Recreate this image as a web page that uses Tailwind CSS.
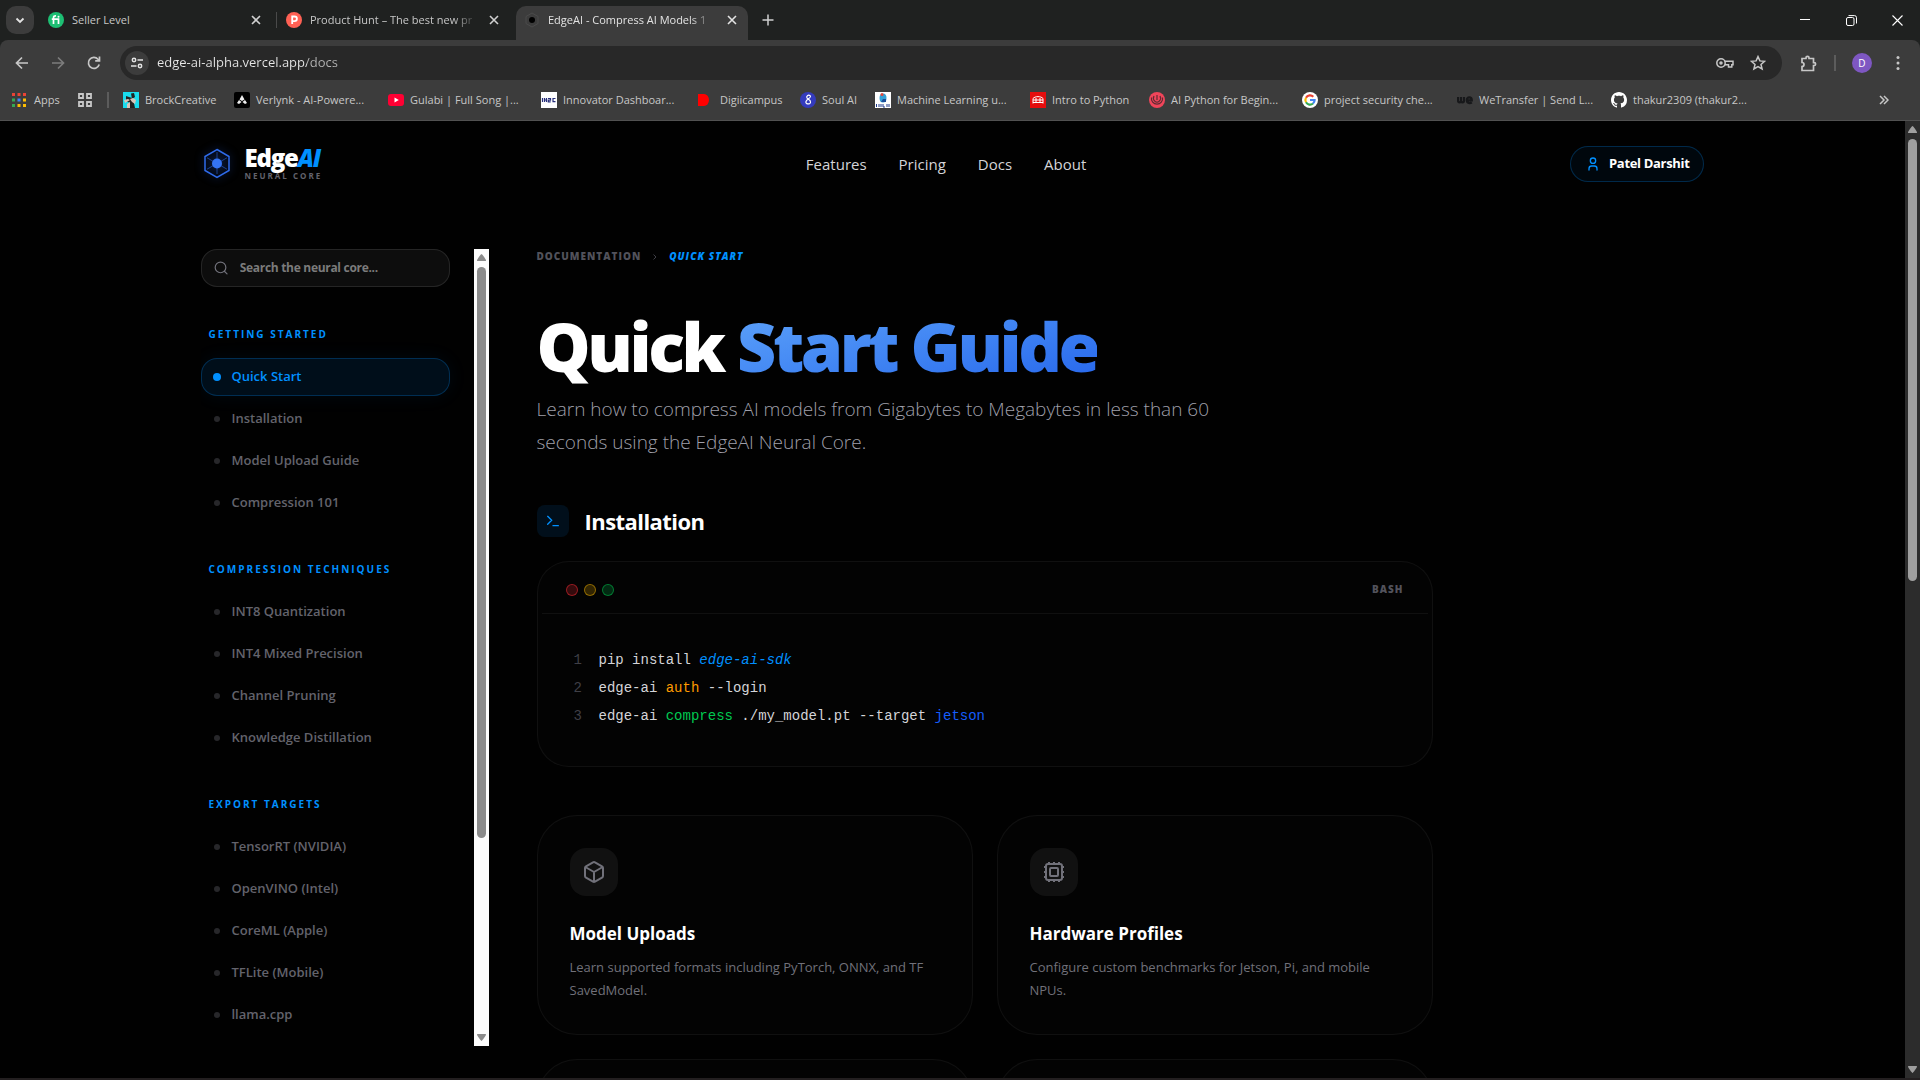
<!DOCTYPE html>
<html lang="en">

<head>
    <meta charset="UTF-8">
    <meta name="viewport" content="width=device-width, initial-scale=1.0">
    <title>EdgeAI - Compress AI Models</title>
    <script src="https://cdn.jsdelivr.net/npm/@tailwindcss/browser@4"></script>
</head>

<body class="h-screen flex flex-col overflow-hidden bg-black font-['Open_Sans','Noto_Sans',sans-serif] text-white">

    <!-- Tab strip -->
    <div class="h-10 shrink-0 flex bg-[#1f2120] text-[11px] text-[#c7c7c7]">
        <button aria-label="Search tabs" class="ml-[6px] mt-[6px] size-7 rounded-[10px] bg-[#3c3c3c] flex items-center justify-center">
            <svg class="size-3" viewBox="0 0 12 12" fill="none" stroke="#e3e3e3" stroke-width="1.8"><path d="M2.5 4.5 6 8l3.500-3.500" /></svg>
        </button>
        <div class="ml-[6px] w-[236px] flex items-center pl-2">
            <svg class="size-4 shrink-0" viewBox="0 0 16 16"><circle cx="8" cy="8" r="8" fill="#1dbf73" /><g stroke="#fff" stroke-width="1.700" fill="none"><path d="M5.500 12V6c0-1.600.8-2.300 2.500-2.200M3.800 7.100h6.700V12" /></g><circle cx="10.500" cy="4.700" r="1" fill="#fff" /></svg>
            <span class="ml-2 flex-1">Seller Level</span>
            <button aria-label="Close tab" class="mr-[15px]"><svg class="size-[10px]" viewBox="0 0 10 10" stroke="#d0d0d0" stroke-width="1.600"><path d="m1 1 8 8M9 1 1 9" /></svg></button>
        </div>
        <div class="w-[240px] flex items-center">
            <span class="w-px h-4 bg-[#4a4a4a] mr-[9px]"></span>
            <svg class="size-4 shrink-0" viewBox="0 0 16 16"><circle cx="8" cy="8" r="8" fill="#ff6154" /><path d="M6.200 12V4.500h2.400a2.300 2.300 0 0 1 0 4.600H6.200" fill="none" stroke="#fff" stroke-width="1.800" /></svg>
            <span class="ml-2 w-[168px] whitespace-nowrap mask-r-from-85%">Product Hunt – The best new pr</span>
            <button aria-label="Close tab" class="ml-[11px]"><svg class="size-[10px]" viewBox="0 0 10 10" stroke="#d0d0d0" stroke-width="1.600"><path d="m1 1 8 8M9 1 1 9" /></svg></button>
        </div>
        <div class="mt-[6px] w-[232px] rounded-t-[10px] bg-[#3c3c3c] flex items-center pl-2 text-[#e3e3e3] pb-[6px]">
            <svg class="size-4 shrink-0" viewBox="0 0 16 16"><path d="m8 1 6 3.500v7L8 15l-6-3.500v-7z" fill="none" stroke="#4b4b4b" /><circle cx="8" cy="8" r="3" fill="#000" /></svg>
            <span class="ml-2 w-[167px] whitespace-nowrap mask-r-from-85%">EdgeAI - Compress AI Models 1</span>
            <button aria-label="Close tab" class="ml-3"><svg class="size-[10px]" viewBox="0 0 10 10" stroke="#e3e3e3" stroke-width="1.600"><path d="m1 1 8 8M9 1 1 9" /></svg></button>
        </div>
        <button aria-label="New tab" class="ml-[14px]"><svg class="size-3" viewBox="0 0 12 12" stroke="#d0d0d0" stroke-width="1.500"><path d="M6 .5v11M.5 6h11" /></svg></button>
        <div class="ml-auto flex">
            <button aria-label="Minimize" class="w-[46px] flex items-center justify-center"><svg class="size-[10px]" viewBox="0 0 10 10" stroke="#fff"><path d="M0 4.500h10" /></svg></button>
            <button aria-label="Restore" class="w-[46px] flex items-center justify-center"><svg class="size-[11px]" viewBox="0 0 11 11" fill="none" stroke="#fff"><rect x=".5" y="2.500" width="7.500" height="8" rx="1.500" /><path d="M2.500.6H8.500a2 2 0 0 1 2 2V8.500" /></svg></button>
            <button aria-label="Close" class="w-[46px] flex items-center justify-center"><svg class="size-[11px]" viewBox="0 0 11 11" stroke="#fff" stroke-width="1.100"><path d="m.5.5 10 10M10.500.5l-10 10" /></svg></button>
        </div>
    </div>

    <!-- Address bar -->
    <div class="shrink-0 bg-[#1f2120]">
        <div class="h-[46px] rounded-t-[8px] bg-[#3c3c3c] flex items-center">
            <button aria-label="Back" class="w-9 ml-1 flex justify-center"><svg class="size-4" viewBox="0 0 16 16" fill="none" stroke="#c7c7c7" stroke-width="1.700"><path d="M14 8H2.500M8 2.500 2.500 8 8 13.500" /></svg></button>
            <button aria-label="Forward" class="w-9 flex justify-center"><svg class="size-4" viewBox="0 0 16 16" fill="none" stroke="#7c7c7c" stroke-width="1.700"><path d="M2 8h11.500M8 2.500 13.500 8 8 13.500" /></svg></button>
            <button aria-label="Reload" class="w-9 flex justify-center"><svg class="size-4" viewBox="0 0 16 16" fill="none" stroke="#c7c7c7" stroke-width="1.700"><path d="M13.200 9.500A5.500 5.500 0 1 1 12 4.200l1 1.100" /><path d="M13.500 1.500v4.300H9.200" /></svg></button>
            <div class="ml-2 flex-1 h-[34px] rounded-full bg-[#282828] flex items-center pl-[5px]">
                <button aria-label="Site information" class="size-6 rounded-full bg-[#3c3c3c] flex items-center justify-center">
                    <svg class="size-[14px]" viewBox="0 0 14 14" fill="none" stroke="#e3e3e3" stroke-width="1.500"><circle cx="4" cy="4" r="1.700" /><path d="M7.500 4H13M1 10h5.500" /><circle cx="10" cy="10" r="1.700" /></svg>
                </button>
                <input type="text" aria-label="Address" value="edge-ai-alpha.vercel.app/docs"
                    class="ml-2 flex-1 text-[13px] bg-[linear-gradient(to_right,#e8e8e8_150px,#b4b4b4_150px)] bg-clip-text text-transparent outline-none">
                <button aria-label="Passwords" class="mr-4"><svg class="w-[18px] h-4" viewBox="0 0 18 16" fill="none" stroke="#c7c7c7" stroke-width="1.500"><circle cx="5" cy="8" r="4.200" /><circle cx="5" cy="8" r="1" /><path d="M8.800 6.200H17v3.600h-1.200V12h-3.300V9.800H8.800" /></svg></button>
                <button aria-label="Bookmark this page" class="mr-4"><svg class="size-4" viewBox="0 0 16 16" fill="none" stroke="#c7c7c7" stroke-width="1.500"><path d="m8 1.600 1.900 4.300 4.700.4-3.600 3.100 1.100 4.600L8 11.600 3.900 14 5 9.400 1.400 6.300l4.700-.4z" /></svg></button>
            </div>
            <button aria-label="Extensions" class="ml-[18px]"><svg class="size-[17px]" viewBox="0 0 17 17" fill="none" stroke="#c7c7c7" stroke-width="1.700"><path d="M2 3.500h4V2.800a1.500 1.500 0 0 1 3 0v.7h4.500v4.200h.7a1.400 1.400 0 0 1 0 2.800h-.7v5H2v-4a2 2 0 0 0 0-4z" /></svg></button>
            <span class="w-[2px] h-4 bg-[#5c5c5c] ml-[17px]"></span>
            <button class="ml-4 size-5 rounded-full bg-[#7e57c2] text-[10px] leading-5">D</button>
            <button aria-label="Menu" class="w-4 ml-[18px] mr-[14px] flex justify-center"><svg class="w-1 h-4" viewBox="0 0 4 16" fill="#c7c7c7"><circle cx="2" cy="2.500" r="1.500" /><circle cx="2" cy="8" r="1.500" /><circle cx="2" cy="13.500" r="1.500" /></svg></button>
        </div>
    </div>

    <!-- Bookmarks -->
    <div class="h-[35px] shrink-0 bg-[#3c3c3c] border-b border-[#515151] flex items-center text-[11px] leading-4 text-[#c7c7c7] whitespace-nowrap pb-[6px]">
        <a href="#" class="ml-3 w-[66px] flex items-center gap-2">
            <svg class="size-[14px]" viewBox="0 0 14 14"><g fill="#ea4335"><path d="M0 0h3v3H0zM5.500 0h3v3h-3zM11 0h3v3h-3z" /></g><path fill="#34a853" d="M0 5.500h3v3H0zM0 11h3v3H0z" /><path fill="#4285f4" d="M5.500 5.500h3v3h-3z" /><path fill="#fbbc04" d="M11 5.500h3v3h-3zM5.500 11h3v3h-3zM11 11h3v3h-3z" /></svg>
            Apps
        </a>
        <button aria-label="Tab groups"><svg class="size-[14px]" viewBox="0 0 14 14" fill="none" stroke="#c7c7c7" stroke-width="1.800"><path d="M1 1h4v4H1zM9 1h4v4H9zM1 9h4v4H1zM9 9h4v4H9z" /></svg></button>
        <span class="w-[2px] h-4 bg-[#5c5c5c] ml-[15px] mr-[14px]"></span>
        <a href="#" class="w-[111px] flex items-center gap-[6px]">
            <svg class="size-4" viewBox="0 0 16 16"><path fill="#19dcee" d="M0 0h16v16H0z" /><path fill="#222" d="M8 1.500 11 1l1 4-3 2zM3 4l6 2 2 5 1 5H6l1-5-4-2z" /><path fill="#d8c4b8" d="m7 7 3-1 3 2-1 4-3-2zM1 8l4-1 2 1-5 3zM4 12l3-2v6H4z" /></svg>
            BrockCreative
        </a>
        <a href="#" class="w-[154px] flex items-center gap-[6px]">
            <svg class="size-4" viewBox="0 0 16 16"><rect width="16" height="16" rx="2" fill="#000" /><path d="m8 3 2.500 4.500L8 9 5.500 7.500zM5 8l2.500 2L5 12 3 11zM11 8l-2.500 2 2.500 2 2-1z" fill="#eee" /></svg>
            Verlynk - AI-Powere...
        </a>
        <a href="#" class="w-[153px] flex items-center gap-[6px]">
            <svg class="size-4" viewBox="0 0 16 16"><rect y="2" width="16" height="12" rx="3" fill="#ff0033" /><path d="m6.500 5.500 4.300 2.500-4.300 2.500z" fill="#fff" /></svg>
            Gulabi | Full Song |...
        </a>
        <a href="#" class="w-[157px] flex items-center gap-[6px]">
            <svg class="size-4" viewBox="0 0 16 16"><path fill="#fff" d="M0 0h16v16H0z" /><path d="M1.500 6v4M3.500 6v4M3.500 8h2M5.500 6v4M7 6.500h2.500v1.700H7.300v1.700h2.400M14.500 6.500H12V9.700h2.500" fill="none" stroke="#28307c" stroke-width="1.200" /></svg>
            Innovator Dashboar...
        </a>
        <a href="#" class="w-[102px] flex items-center gap-[6px]">
            <svg class="size-4" viewBox="0 0 16 16"><path d="M0 2h6a5 6 0 0 1 0 12H0z" fill="#ff0000" /></svg>
            Digiicampus
        </a>
        <a href="#" class="w-[75px] flex items-center gap-[6px]">
            <svg class="size-4" viewBox="0 0 16 16"><circle cx="8" cy="8" r="8" fill="#343bbd" /><path d="M10.500 4C8 2 6 4.500 7 6s4 2 3.500 4.500S5 12 6 9.500 11 6 10.500 4" fill="none" stroke="#fff" stroke-width="1.200" /></svg>
            Soul AI
        </a>
        <a href="#" class="w-[155px] flex items-center gap-[6px]">
            <svg class="size-4" viewBox="0 0 16 16"><path fill="#fff" d="M0 0h16v16H0z" /><ellipse cx="8" cy="6" rx="3.500" ry="4.500" fill="#35a1d6" /><circle cx="7" cy="2.500" r="1.500" fill="#e2473b" /><path d="M8 7h3v3H6z" fill="#1c4d9a" /><path d="M1.500 12v3M4 12v3M6 12v3M8 12v3h2M12 12v3M14 12v3" stroke="#1d3a8b" fill="none" /></svg>
            Machine Learning u...
        </a>
        <a href="#" class="w-[119px] flex items-center gap-[6px]">
            <svg class="size-4" viewBox="0 0 16 16"><path fill="#e50d0d" d="M0 0h16v16H0z" /><path d="M3 6.500c2-2.500 8-2.500 10 0M3 6.500v5M13 6.500v5M3 8h10M3 10.500h10M6 6v4M10 6v4" stroke="#fff" fill="none" /></svg>
            Intro to Python
        </a>
        <a href="#" class="w-[153px] flex items-center gap-[6px]">
            <svg class="size-4" viewBox="0 0 16 16"><circle cx="8" cy="8" r="8" fill="#f0455a" /><g fill="none" stroke="#5f2a33" stroke-width="1.200"><path d="M2.500 5.500a5.600 5.600 0 1 0 11 0M5 4a3.500 4 0 1 0 6 0M8 3v5" /></g></svg>
            AI Python for Begin...
        </a>
        <a href="#" class="w-[155px] flex items-center gap-[6px]">
            <svg class="size-4" viewBox="0 0 16 16"><circle cx="8" cy="8" r="8" fill="#fff" /><g fill="none" stroke-width="2.200"><path d="M11.300 4.700A4.600 4.600 0 0 0 4 5.700" stroke="#ea4335" /><path d="M4 5.700a4.600 4.600 0 0 0 0 4.600" stroke="#fbbc04" /><path d="M4 10.300a4.600 4.600 0 0 0 7 1.200" stroke="#34a853" /><path d="M11 11.500A4.600 4.600 0 0 0 12.600 8H8" stroke="#4285f4" /></g></svg>
            project security che...
        </a>
        <a href="#" class="w-[154px] flex items-center gap-[6px]">
            <svg class="size-4" viewBox="0 0 16 16" fill="none" stroke="#17181a" stroke-width="2.200"><path d="M1 5v3.500c0 2.500 3 2.500 3 0V5v3.500c0 2.500 3 2.500 3 0V5M10 8.300h4.800c0-4-5-4-5 0 0 3 3.500 3.300 5 2" /></svg>
            WeTransfer | Send L...
        </a>
        <a href="#" class="flex items-center gap-[6px]">
            <svg class="size-4" viewBox="0 0 16 16" fill="#fff"><path d="M8 0C3.580 0 0 3.580 0 8c0 3.540 2.290 6.530 5.470 7.590.4.070.55-.17.55-.38 0-.19-.01-.82-.01-1.490-2.010.37-2.530-.49-2.690-.94-.09-.23-.48-.94-.82-1.130-.28-.15-.68-.52-.01-.53.63-.01 1.080.58 1.230.82.72 1.210 1.870.87 2.330.66.07-.52.28-.87.51-1.070-1.780-.2-3.640-.89-3.640-3.950 0-.87.31-1.590.82-2.150-.08-.2-.36-1.020.08-2.120 0 0 .67-.21 2.200.82.64-.18 1.320-.27 2-.27s1.360.09 2 .27c1.530-1.040 2.200-.82 2.200-.82.44 1.100.16 1.920.08 2.120.51.56.82 1.270.82 2.150 0 3.070-1.870 3.750-3.650 3.950.29.25.54.73.54 1.480 0 1.070-.01 1.930-.01 2.200 0 .21.15.46.55.38A8.010 8.010 0 0 0 16 8c0-4.420-3.580-8-8-8" /></svg>
            thakur2309 (thakur2...
        </a>
        <button aria-label="More bookmarks" class="ml-auto mr-[31px]"><svg class="size-[10px]" viewBox="0 0 10 10" fill="none" stroke="#c7c7c7" stroke-width="1.500"><path d="m1 1 4 4-4 4M5 1l4 4-4 4" /></svg></button>
    </div>

    <!-- Page -->
    <div class="flex-1 min-h-0 flex border-b-2 border-[#231f20]">
        <div class="flex-1 overflow-hidden bg-[#010101]">
            <div class="max-w-[1536px] mx-auto px-4">
                <header class="h-[86px] flex items-center justify-between">
                    <a href="#" class="flex items-center gap-3">
                        <svg class="size-8 drop-shadow-[0_0_4px_#2563eb80]" viewBox="0 0 32 32" fill="none" stroke="#2f6bea">
                            <path d="m16 1.500 12 7v14l-12 7-12-7v-14z" stroke-width="1.500" />
                            <path d="M16 4v22M6 9.800l20 11.400M26 9.800 6 21.200" stroke-opacity=".55" />
                            <circle cx="16" cy="15.500" r="5" fill="#3474f4" stroke="none" />
                        </svg>
                        <span>
                            <span class="block text-2xl leading-6 font-extrabold tracking-tighter">Edge<span class="italic text-[#0090ff]">AI</span></span>
                            <span class="block text-[8px] leading-3 font-bold tracking-[2px] text-[#63636c]">NEURAL CORE</span>
                        </span>
                    </a>
                    <nav class="flex gap-8 text-[15px] font-medium text-[#d4d4d8]">
                        <a href="#">Features</a>
                        <a href="#">Pricing</a>
                        <a href="#">Docs</a>
                        <a href="#">About</a>
                    </nav>
                    <button class="h-9 px-[14px] rounded-full border border-[#0090ff]/25 bg-[#0090ff]/5 flex items-center gap-2 text-[13px] font-bold tracking-tight">
                        <svg class="size-4" viewBox="0 0 24 24" fill="none" stroke="#0090ff" stroke-width="2" stroke-linecap="round"><path d="M18 21v-2a4 4 0 0 0-4-4h-4a4 4 0 0 0-4 4v2" /><circle cx="12" cy="7" r="4" /></svg>
                        Patel Darshit
                    </button>
                </header>

                <div class="mt-[42px] flex gap-12">
                    <!-- Docs menu -->
                    <aside class="w-72 h-[calc(100vh-283px)] shrink-0 flex">
                        <div class="flex-1 pr-6 overflow-hidden text-[13px] font-semibold text-[#63636c]">
                            <div class="h-[38px] rounded-2xl border border-white/10 bg-white/5 flex items-center pl-3 mb-10">
                                <svg class="size-4" viewBox="0 0 24 24" fill="none" stroke="#71717a" stroke-width="2" stroke-linecap="round"><circle cx="11" cy="11" r="9" /><path d="m17.500 17.500 4.500 4.500" /></svg>
                                <input type="text" aria-label="Search" placeholder="Search the neural core..."
                                    class="ml-3 w-full text-xs font-bold tracking-tight bg-transparent outline-none placeholder:text-[#7b7b7b]">
                            </div>

                            <h4 class="pl-2 mb-4 text-[10px] leading-[15px] font-bold tracking-[2px] text-[#0090ff]">GETTING STARTED</h4>
                            <ul class="flex flex-col gap-1 mb-10">
                                <li><a href="#" class="h-[38px] rounded-2xl border border-[#0090ff]/25 bg-[#0090ff]/10 shadow-[0_0_20px_#0090ff12] pl-[11px] flex items-center gap-[11px] text-[#0090ff]"><span class="size-2 rounded-full bg-[#0090ff]"></span>Quick Start</a></li>
                                <li><a href="#" class="h-[38px] pl-[13px] flex items-center gap-3"><span class="size-[6px] rounded-full bg-[#27272a]"></span>Installation</a></li>
                                <li><a href="#" class="h-[38px] pl-[13px] flex items-center gap-3"><span class="size-[6px] rounded-full bg-[#27272a]"></span>Model Upload Guide</a></li>
                                <li><a href="#" class="h-[38px] pl-[13px] flex items-center gap-3"><span class="size-[6px] rounded-full bg-[#27272a]"></span>Compression 101</a></li>
                            </ul>

                            <h4 class="pl-2 mb-4 text-[10px] leading-[15px] font-bold tracking-[2px] text-[#0090ff]">COMPRESSION TECHNIQUES</h4>
                            <ul class="flex flex-col gap-1 mb-10">
                                <li><a href="#" class="h-[38px] pl-[13px] flex items-center gap-3"><span class="size-[6px] rounded-full bg-[#27272a]"></span>INT8 Quantization</a></li>
                                <li><a href="#" class="h-[38px] pl-[13px] flex items-center gap-3"><span class="size-[6px] rounded-full bg-[#27272a]"></span>INT4 Mixed Precision</a></li>
                                <li><a href="#" class="h-[38px] pl-[13px] flex items-center gap-3"><span class="size-[6px] rounded-full bg-[#27272a]"></span>Channel Pruning</a></li>
                                <li><a href="#" class="h-[38px] pl-[13px] flex items-center gap-3"><span class="size-[6px] rounded-full bg-[#27272a]"></span>Knowledge Distillation</a></li>
                            </ul>

                            <h4 class="pl-2 mb-4 text-[10px] leading-[15px] font-bold tracking-[2px] text-[#0090ff]">EXPORT TARGETS</h4>
                            <ul class="flex flex-col gap-1">
                                <li><a href="#" class="h-[38px] pl-[13px] flex items-center gap-3"><span class="size-[6px] rounded-full bg-[#27272a]"></span>TensorRT (NVIDIA)</a></li>
                                <li><a href="#" class="h-[38px] pl-[13px] flex items-center gap-3"><span class="size-[6px] rounded-full bg-[#27272a]"></span>OpenVINO (Intel)</a></li>
                                <li><a href="#" class="h-[38px] pl-[13px] flex items-center gap-3"><span class="size-[6px] rounded-full bg-[#27272a]"></span>CoreML (Apple)</a></li>
                                <li><a href="#" class="h-[38px] pl-[13px] flex items-center gap-3"><span class="size-[6px] rounded-full bg-[#27272a]"></span>TFLite (Mobile)</a></li>
                                <li><a href="#" class="h-[38px] pl-[13px] flex items-center gap-3"><span class="size-[6px] rounded-full bg-[#27272a]"></span>llama.cpp</a></li>
                            </ul>
                        </div>
                        <div class="w-[15px] bg-[#fcfcfc] flex flex-col items-center py-[5px]">
                            <svg class="w-[9px] h-[7px] shrink-0" viewBox="0 0 9 7" fill="#8b8b8b"><path d="M4.500 0c.6 0 4.500 5.500 4.500 6.200s-.2.800-.8.800H.8C.2 7 0 6.900 0 6.200S3.900 0 4.500 0" /></svg>
                            <div class="flex-1 w-[9px] py-[6px]"><div class="h-[75%] rounded-full bg-[#8b8b8b]"></div></div>
                            <svg class="w-[9px] h-[7px] shrink-0" viewBox="0 0 9 7" fill="#8b8b8b"><path d="M4.500 7C3.900 7 0 1.500 0 .8S.2 0 .8 0h7.400c.6 0 .8.100.8.800S5.100 7 4.500 7" /></svg>
                        </div>
                    </aside>

                    <!-- Article -->
                    <main class="flex-1 max-w-4xl">
                        <div class="flex items-center gap-3 text-[10px] leading-[15px] font-extrabold tracking-[1px] text-[#52525b]">
                            <a href="#">DOCUMENTATION</a>
                            <svg class="w-1 h-[6px]" viewBox="0 0 4 6" fill="none" stroke="#3f3f46"><path d="m.5.5 2.500 2.500L.5 5.500" /></svg>
                            <span class="italic text-[#0090ff]">QUICK START</span>
                        </div>
                        <h1 class="mt-[46px] text-[68px] leading-[72px] font-extrabold tracking-tighter">Quick <span class="bg-linear-to-br from-[#60a5fa] to-[#2563eb] bg-clip-text text-transparent">Start Guide</span></h1>
                        <p class="mt-[11px] max-w-[690px] text-[19px] leading-[33px] font-light text-[#9f9fa9]">Learn how to compress AI models from Gigabytes to Megabytes in less than 60 seconds using the EdgeAI Neural Core.</p>

                        <div class="mt-[46px] flex items-center gap-4">
                            <span class="size-8 rounded-lg bg-[#0090ff]/10 flex items-center justify-center">
                                <svg class="size-4" viewBox="0 0 24 24" fill="none" stroke="#0090ff" stroke-width="2" stroke-linecap="round"><path d="m4 17 6-6-6-6M12 19h8" /></svg>
                            </span>
                            <h2 class="text-[22px] leading-8 font-bold tracking-tight">Installation</h2>
                        </div>

                        <div class="mt-6 rounded-[32px] border border-white/5 bg-[#030303] p-1">
                            <div class="flex items-center gap-[6px] px-6 py-4 border-b border-white/5">
                                <span class="size-3 rounded-full border border-[#fb2c36]/50 bg-[#fb2c36]/20"></span>
                                <span class="size-3 rounded-full border border-[#f0b100]/50 bg-[#f0b100]/20"></span>
                                <span class="size-3 rounded-full border border-[#00c950]/50 bg-[#00c950]/20"></span>
                                <span class="ml-auto text-[10px] leading-[15px] font-extrabold tracking-[1px] text-[#52525b]">BASH</span>
                            </div>
                            <pre class="p-8 font-['Liberation_Mono',monospace] text-[14px] leading-7 text-[#d4d4d8]"><code class="grid grid-cols-[9px_1fr] gap-x-4"><span class="text-[#3f3f46]">1</span><span>pip install <i class="text-[#0090ff]">edge-ai-sdk</i></span><span class="text-[#3f3f46]">2</span><span>edge-ai <span class="text-[#fe9a00]">auth</span> --login</span><span class="text-[#3f3f46]">3</span><span>edge-ai <span class="text-[#00c950]">compress</span> ./my_model.pt --target <span class="text-[#155dfc]">jetson</span></span></code></pre>
                        </div>

                        <div class="mt-12 grid grid-cols-2 gap-6">
                            <a href="#" class="rounded-[40px] border border-white/5 bg-[#030303] p-8">
                                <span class="size-12 rounded-2xl bg-[#111111] flex items-center justify-center">
                                    <svg class="size-6" viewBox="0 0 24 24" fill="none" stroke="#71717a" stroke-width="2" stroke-linejoin="round"><path d="M21 8a2 2 0 0 0-1-1.730l-7-4a2 2 0 0 0-2 0l-7 4A2 2 0 0 0 3 8v8a2 2 0 0 0 1 1.730l7 4a2 2 0 0 0 2 0l7-4A2 2 0 0 0 21 16ZM3.300 7l8.700 5 8.700-5M12 22V12" /></svg>
                                </span>
                                <h3 class="mt-6 text-[17px] leading-7 font-bold">Model Uploads</h3>
                                <p class="mt-2 text-[13px] leading-[23px] text-[#71717a]">Learn supported formats including PyTorch, ONNX, and TF SavedModel.</p>
                            </a>
                            <a href="#" class="rounded-[40px] border border-white/5 bg-[#030303] p-8">
                                <span class="size-12 rounded-2xl bg-[#111111] flex items-center justify-center">
                                    <svg class="size-6" viewBox="0 0 24 24" fill="none" stroke="#71717a" stroke-width="2" stroke-linejoin="round"><rect x="4" y="4" width="16" height="16" rx="2" /><rect x="8" y="8" width="8" height="8" rx="1" /><path d="M12 20v2M12 2v2M17 20v2M17 2v2M2 12h2M2 17h2M2 7h2M20 12h2M20 17h2M20 7h2M7 20v2M7 2v2" /></svg>
                                </span>
                                <h3 class="mt-6 text-[17px] leading-7 font-bold">Hardware Profiles</h3>
                                <p class="mt-2 text-[13px] leading-[23px] text-[#71717a]">Configure custom benchmarks for Jetson, Pi, and mobile NPUs.</p>
                            </a>
                            <div class="h-[220px] rounded-[40px] border border-white/5 bg-[#030303]"></div>
                            <div class="h-[220px] rounded-[40px] border border-white/5 bg-[#030303]"></div>
                        </div>
                    </main>
                </div>
            </div>
        </div>
        <div class="w-[15px] bg-[#2c2c2c] flex flex-col items-center py-[5px]">
            <svg class="w-[9px] h-[7px] shrink-0" viewBox="0 0 9 7" fill="#9f9f9f"><path d="M4.500 0c.6 0 4.500 5.500 4.500 6.200s-.2.800-.8.800H.8C.2 7 0 6.900 0 6.200S3.900 0 4.500 0" /></svg>
            <div class="flex-1 w-[9px] py-[6px]"><div class="h-[48%] rounded-full bg-[#9f9f9f]"></div></div>
            <svg class="w-[9px] h-[7px] shrink-0" viewBox="0 0 9 7" fill="#9f9f9f"><path d="M4.500 7C3.900 7 0 1.500 0 .8S.2 0 .8 0h7.400c.6 0 .8.100.8.800S5.100 7 4.500 7" /></svg>
        </div>
    </div>
</body>

</html>
